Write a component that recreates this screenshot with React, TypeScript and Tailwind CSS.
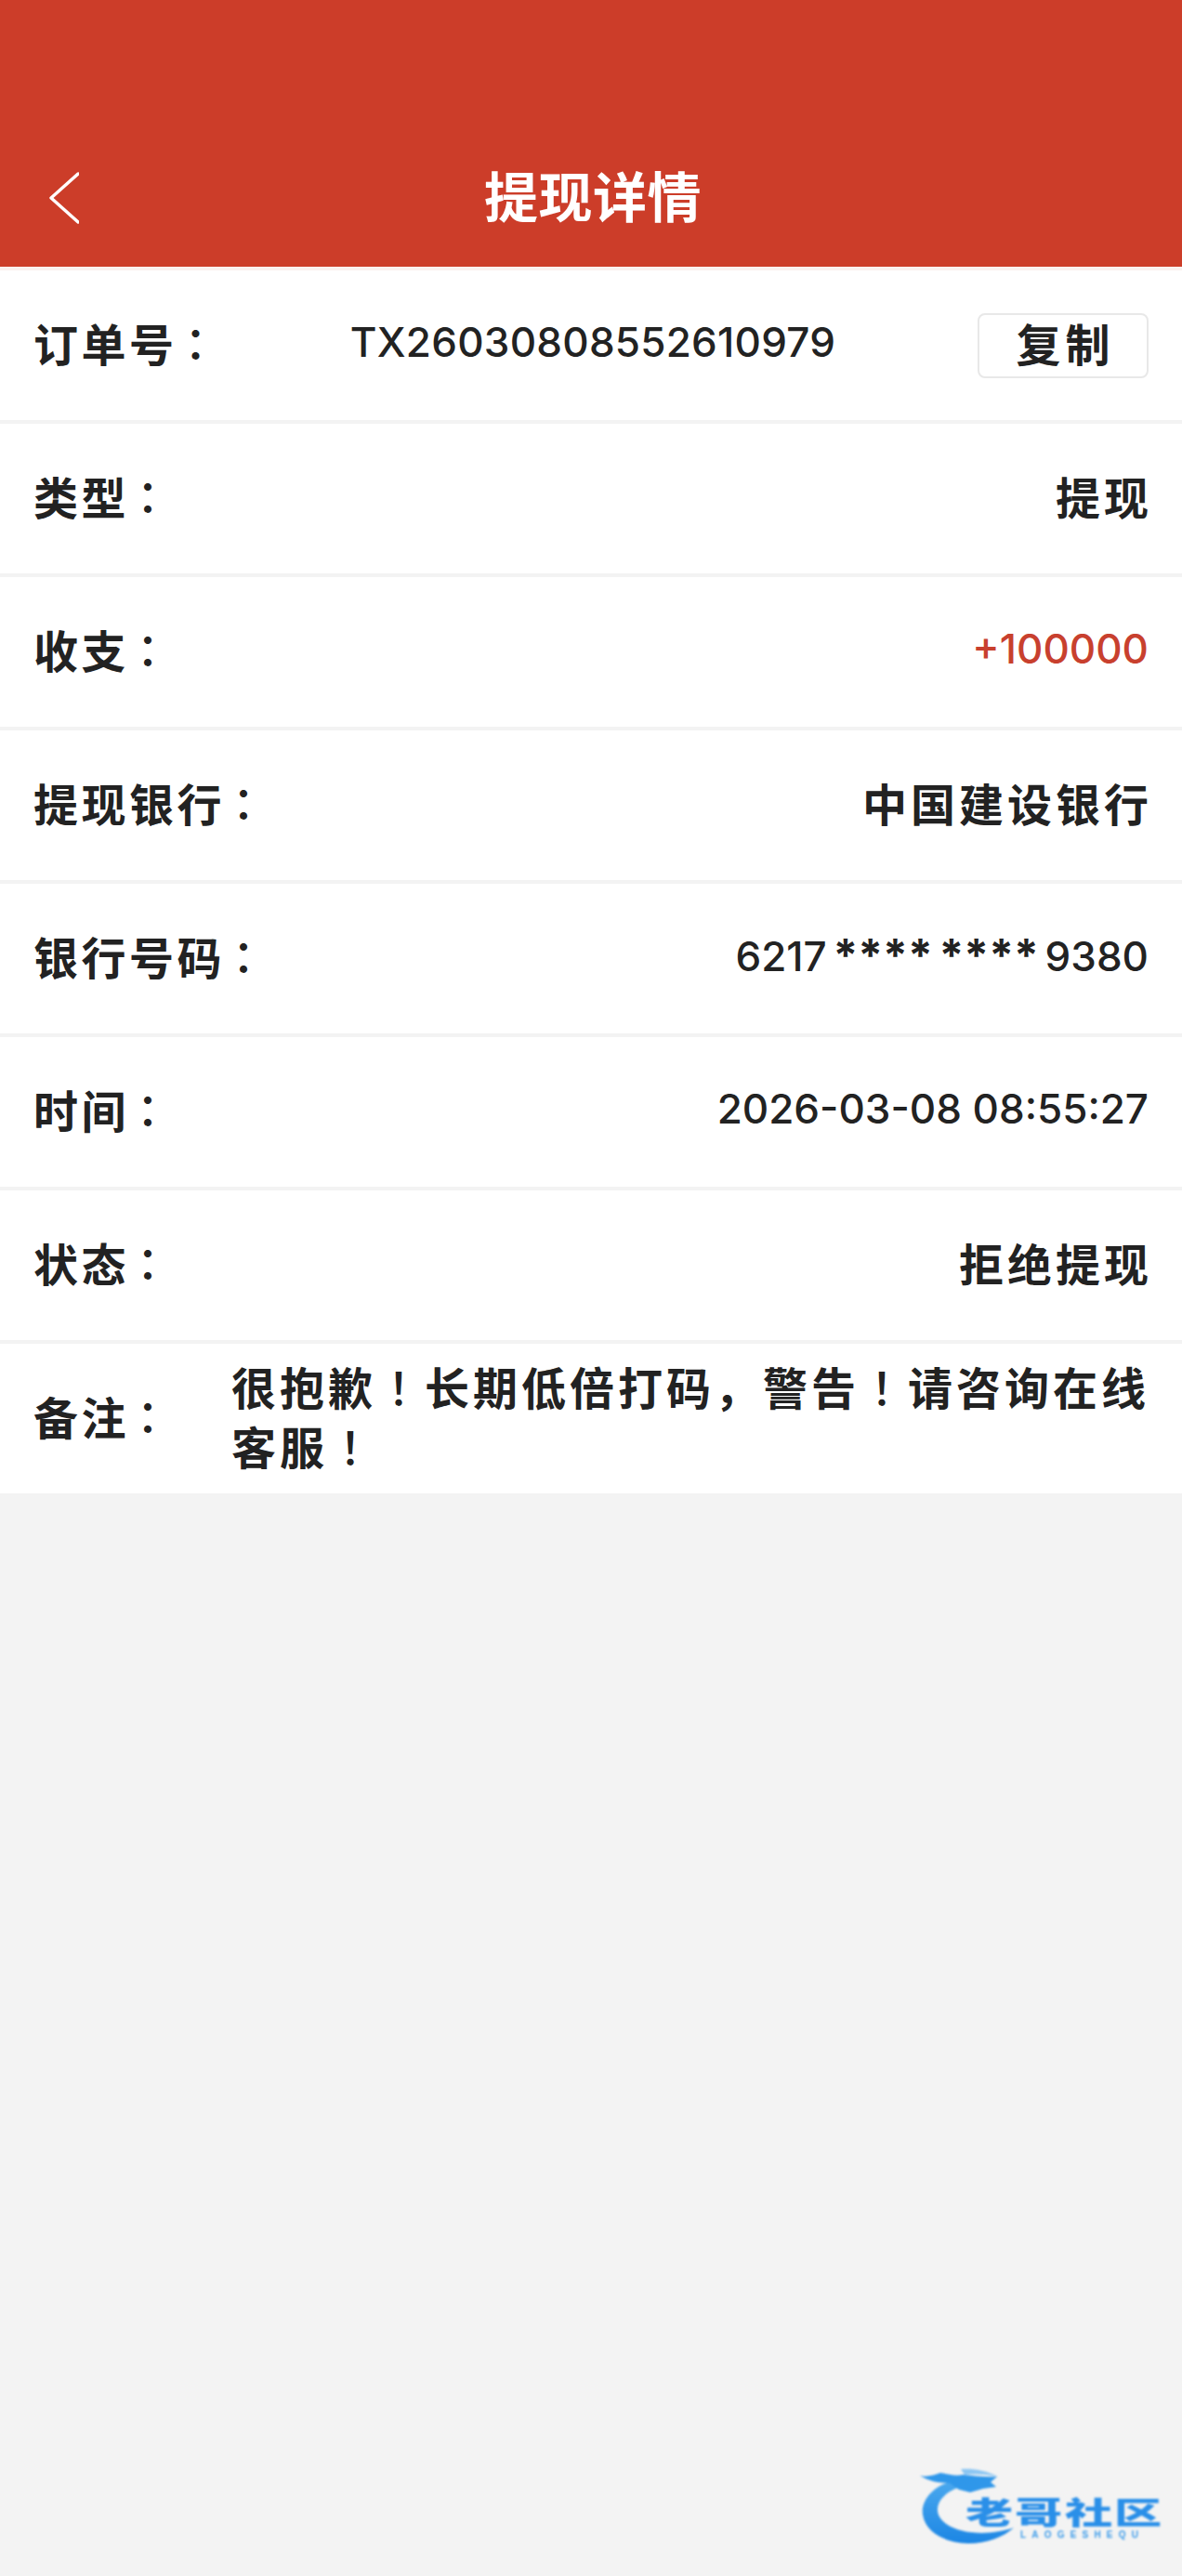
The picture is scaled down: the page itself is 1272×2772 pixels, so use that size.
const Colon = ({ c = "：", pull = false }: { c?: string; pull?: boolean }) => (
  <span className={`font-['Noto_Sans_CJK_TC',sans-serif] font-medium ${pull ? "-ml-[4px]" : ""}`}>{c}</span>
);

const label = "font-['Noto_Sans_CJK_SC',sans-serif] font-bold text-[48px] tracking-[3.5px] leading-none whitespace-nowrap text-[#222222]";
const cjk = "font-['Noto_Sans_CJK_SC',sans-serif] font-bold text-[48px] tracking-[4px] leading-none -mr-[1px] text-[#222222]";
const num = "font-['Inter','Noto_Sans_CJK_SC',sans-serif] font-medium text-[44px] leading-none mr-[3px] text-[#222222]";

function Row({ name, children }: { name: string; children: React.ReactNode }) {
  return (
    <div className="mb-[4px] flex h-[161px] items-center justify-between bg-white pb-[8px] pl-[36px] pr-[33px]">
      <div className={label}>
        {name}
        <Colon pull />
      </div>
      {children}
    </div>
  );
}

function Logo() {
  return (
    <div className="absolute left-[960px] top-[2630px] h-[142px] w-[312px] blur-[0.8px]">
      <svg viewBox="0 0 312 142" className="absolute inset-0 h-full w-full">
        <defs>
          <linearGradient id="lg" x1="0" y1="0" x2="0" y2="1">
            <stop offset="0" stopColor="#4aa8ee" />
            <stop offset="1" stopColor="#1c86e4" />
          </linearGradient>
        </defs>
        <path
          d="M64 40 C42 46 31 62 33 76 C36 96 58 106 82 107 C102 107 120 100 131 90 C118 94 102 97 86 95 C66 93 50 84 49 72 C48 60 60 50 74 46 Z"
          fill="url(#lg)"
        />
        <path
          d="M30 34 C38 36 46 33 52 31 C60 32 68 35 76 33 C88 34 100 36 113 35 L106 41 L112 46 L98 48 L84 52 L72 49 L62 42 C50 42 40 40 30 34 Z"
          fill="#2f97ea"
        />
        <path d="M74 27 C86 26 100 28 114 35 C100 32 88 32 78 33 Z" fill="#8cc6f2" />
      </svg>
      <div className="absolute left-[78px] top-[55px] grid w-[213px] grid-cols-4 font-['Noto_Sans_CJK_SC',sans-serif] text-[33px] font-black leading-[34px] text-[#2a8fe8]">
        <span className="scale-x-[1.55] text-center">老</span>
        <span className="scale-x-[1.55] text-center">哥</span>
        <span className="scale-x-[1.55] text-center">社</span>
        <span className="scale-x-[1.55] text-center">区</span>
      </div>
      <div className="absolute left-[138px] top-[92px] font-['Liberation_Sans',sans-serif] text-[10px] font-bold leading-[12px] tracking-[6.2px] text-[#3b9bea]">
        LAOGESHEQU
      </div>
    </div>
  );
}

export default function App() {
  return (
    <div className="relative min-h-[2772px] w-[1272px] overflow-hidden bg-[#f3f3f3]">
      <header className="relative flex h-[287px] items-end justify-center bg-[#cc3d29] pb-[44px] pl-[4px]">
        <svg
          viewBox="0 0 32 56"
          className="absolute left-[53px] top-[185px] h-[56px] w-[32px]"
          fill="none"
          stroke="#ffffff"
          strokeWidth="3.4"
          strokeLinecap="round"
          strokeLinejoin="round"
        >
          <path d="M31 2 L2 28 L31 54" />
        </svg>
        <h1 className="font-['Noto_Sans_CJK_SC',sans-serif] text-[58px] font-bold leading-[68px] tracking-[0.5px] text-white">提现详情</h1>
      </header>
      <div className="h-[4px] bg-[#fbf1ef]" />
      <Row name="订单号">
        <span className={`${num} mr-[14px]! tracking-[0.25px]`}>TX26030808552610979</span>
        <button className="mr-[3px] mt-[8px] flex h-[70px] w-[184px] items-center justify-center rounded-[8px] border-2 border-[#e8e8e8] bg-white pb-[8px] pl-[5px] font-['Noto_Sans_CJK_SC',sans-serif] text-[48px] font-bold leading-none tracking-[5px] text-[#222222]">
          复制
        </button>
      </Row>
      <Row name="类型">
        <span className={cjk}>提现</span>
      </Row>
      <Row name="收支">
        <span className={`${num} text-[#c8402e]!`}>+100000</span>
      </Row>
      <Row name="提现银行">
        <span className={cjk}>中国建设银行</span>
      </Row>
      <Row name="银行号码">
        <span className={`${num} [word-spacing:-5px]`}>
          6217 <span className="text-[48px] font-bold">****</span> <span className="text-[48px] font-bold">****</span> 9380
        </span>
      </Row>
      <Row name="时间">
        <span className={num}>2026-03-08 08:55:27</span>
      </Row>
      <Row name="状态">
        <span className={cjk}>拒绝提现</span>
      </Row>
      <div className="flex h-[161px] items-center bg-white pb-[8px] pl-[36px] pr-[30px]">
        <div className={`${label} w-[213px] shrink-0`}>
          备注
          <Colon pull />
        </div>
        <p className="font-['Noto_Sans_CJK_SC',sans-serif] text-[48px] font-bold leading-[64px] tracking-[4px] text-[#222222]">
          很抱歉<Colon c="！" />长期低倍打码，警告<Colon c="！" />请咨询在线客服<Colon c="！" />
        </p>
      </div>
      <Logo />
    </div>
  );
}
